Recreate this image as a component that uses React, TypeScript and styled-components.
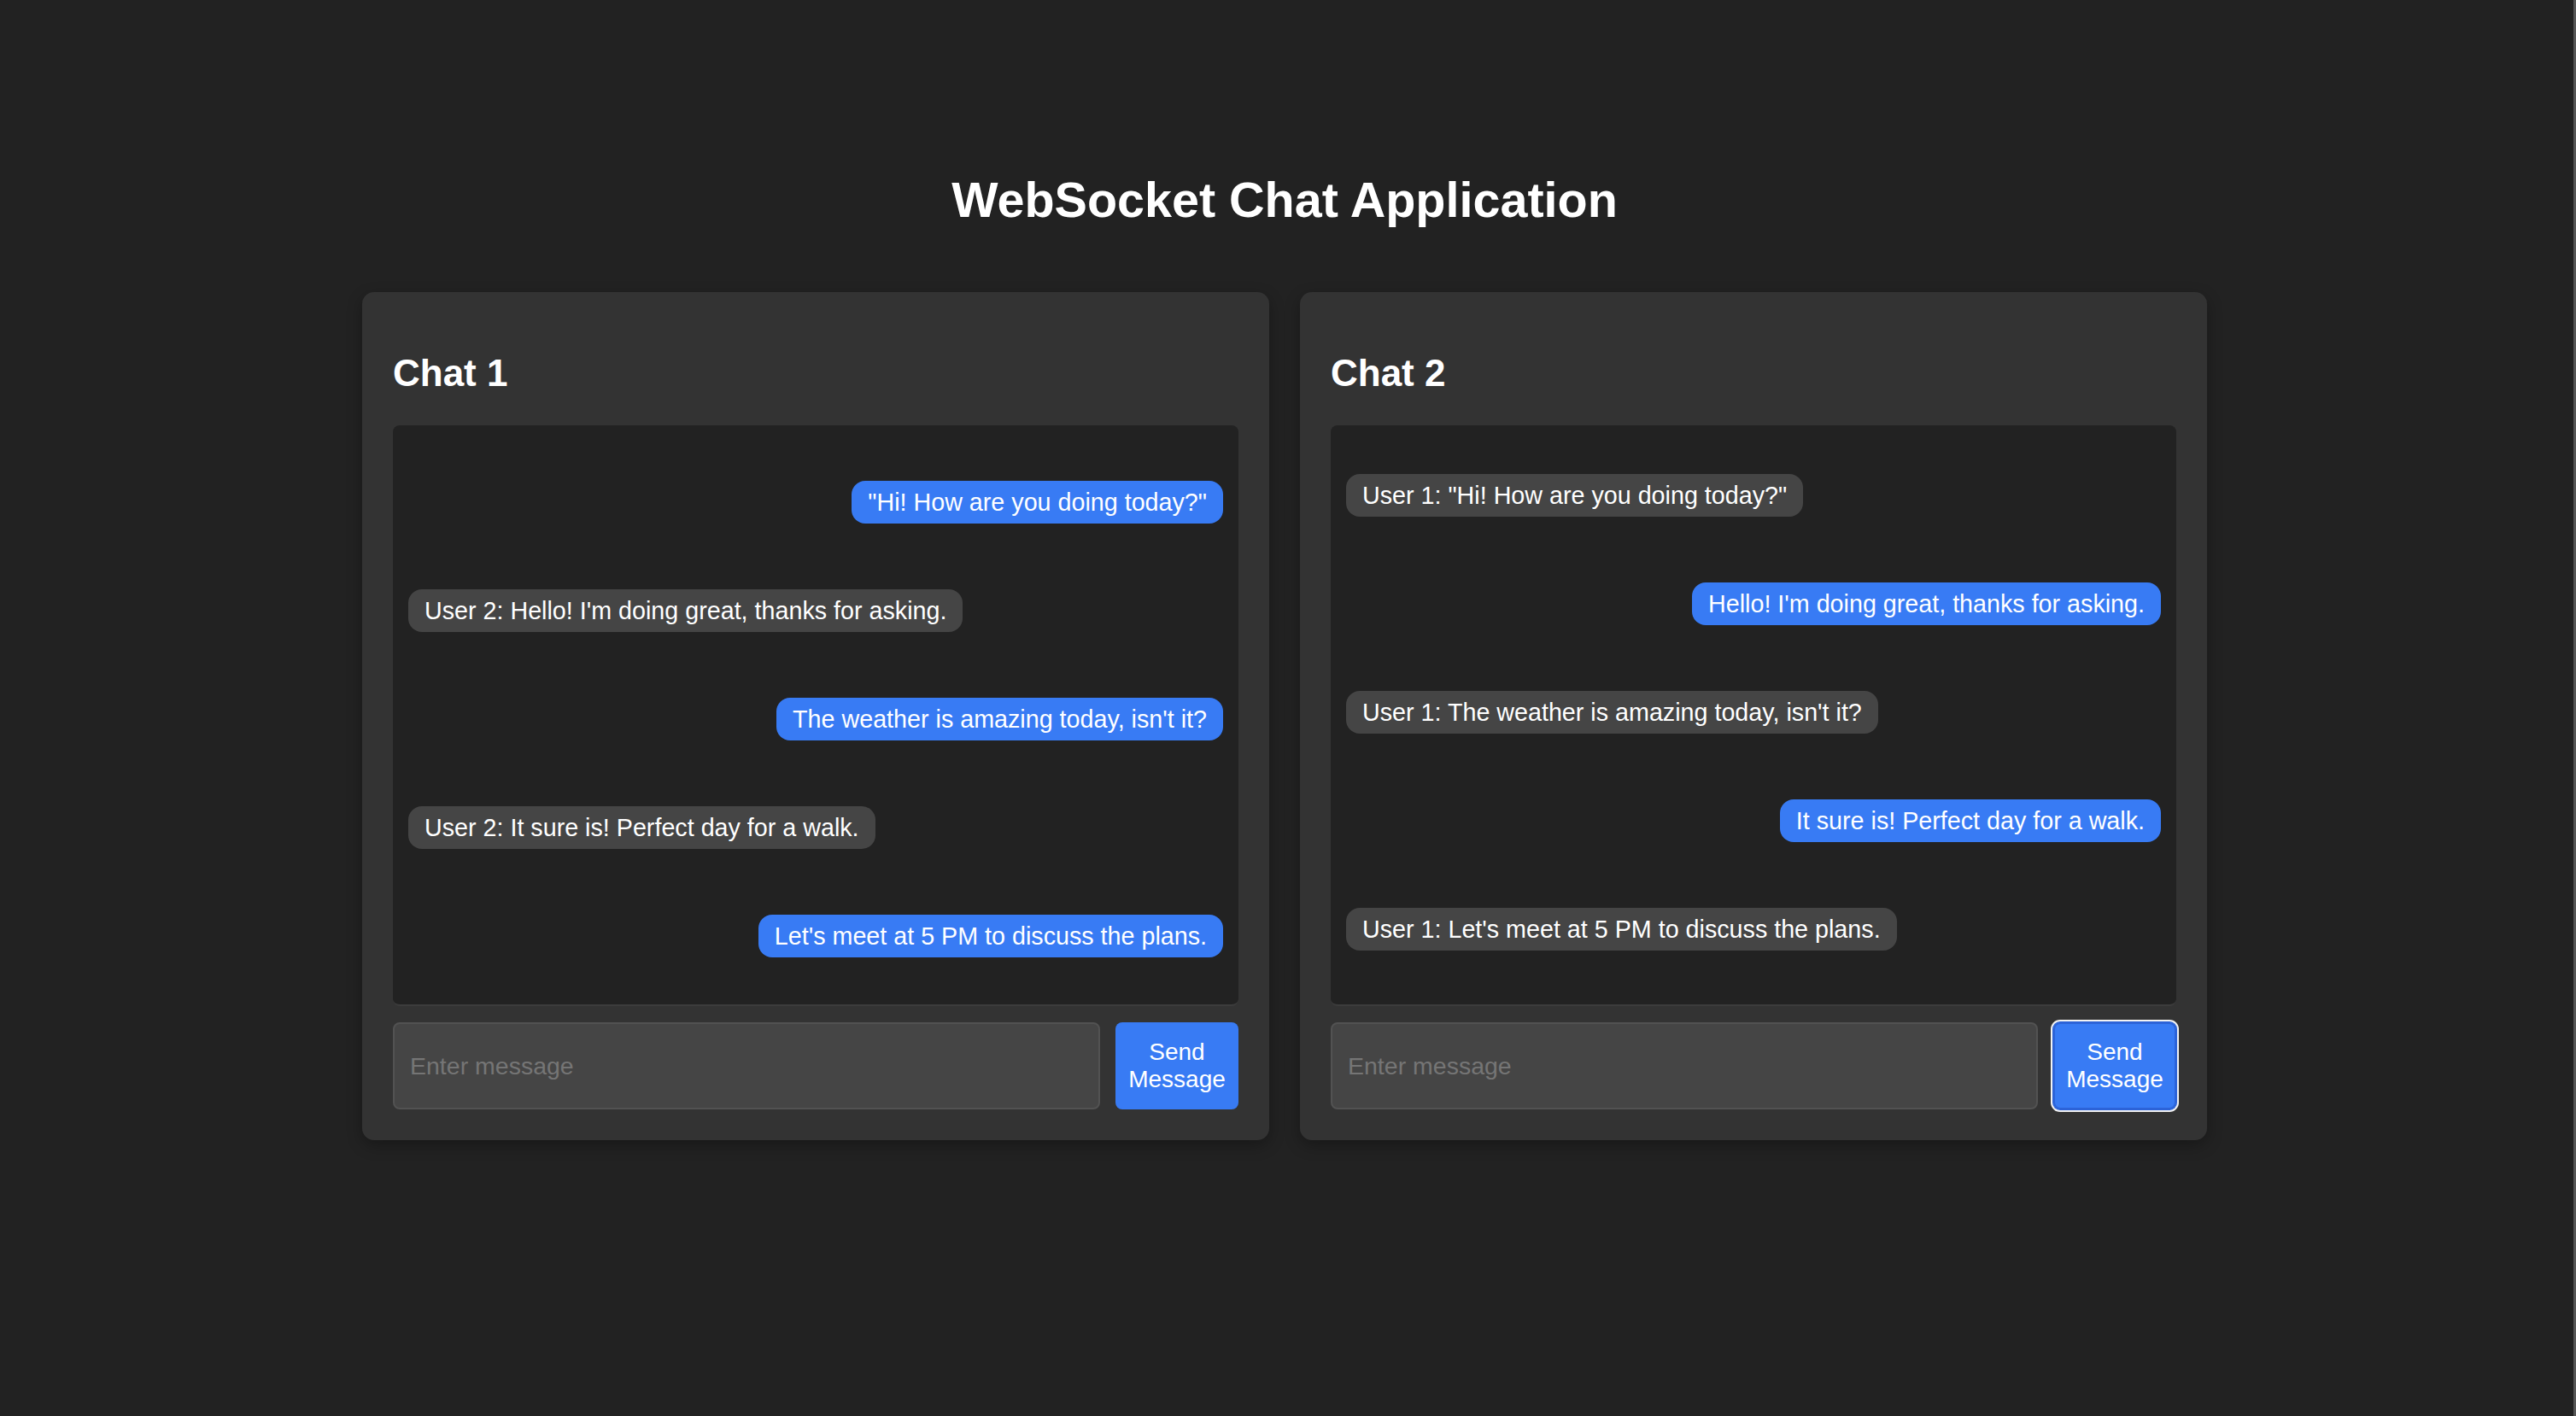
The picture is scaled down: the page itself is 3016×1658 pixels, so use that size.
import * as React from 'react';
import styled, { createGlobalStyle, css } from 'styled-components';

const GlobalStyle = createGlobalStyle`
  html, body {
    margin: 0;
    padding: 0;
    background: #222222;
  }
  body {
    font-family: 'Liberation Sans', Arial, Helvetica, sans-serif;
    color: #ffffff;
  }
  * {
    box-sizing: border-box;
  }
`;

type Message = { text: string; sent: boolean };

const chats: { title: string; messages: Message[]; focused?: boolean; startsSent: boolean }[] = [
  {
    title: 'Chat 1',
    startsSent: true,
    messages: [
      { text: '"Hi! How are you doing today?"', sent: true },
      { text: "User 2: Hello! I'm doing great, thanks for asking.", sent: false },
      { text: "The weather is amazing today, isn't it?", sent: true },
      { text: 'User 2: It sure is! Perfect day for a walk.', sent: false },
      { text: "Let's meet at 5 PM to discuss the plans.", sent: true },
    ],
  },
  {
    title: 'Chat 2',
    startsSent: false,
    focused: true,
    messages: [
      { text: 'User 1: "Hi! How are you doing today?"', sent: false },
      { text: "Hello! I'm doing great, thanks for asking.", sent: true },
      { text: "User 1: The weather is amazing today, isn't it?", sent: false },
      { text: 'It sure is! Perfect day for a walk.', sent: true },
      { text: "User 1: Let's meet at 5 PM to discuss the plans.", sent: false },
    ],
  },
];

export default function App() {
  return (
    <>
      <GlobalStyle />
      <Page>
        <Title>WebSocket Chat Application</Title>
        <Panels>
          {chats.map(chat => (
            <Panel key={chat.title}>
              <ChatTitle>{chat.title}</ChatTitle>
              <Messages startsSent={chat.startsSent}>
                {chat.messages.map((m, i) => (
                  <Row key={i} sent={m.sent}>
                    <Bubble sent={m.sent}>{m.text}</Bubble>
                  </Row>
                ))}
              </Messages>
              <Composer>
                <Input placeholder="Enter message" />
                <SendButton focused={chat.focused}>Send Message</SendButton>
              </Composer>
            </Panel>
          ))}
        </Panels>
      </Page>
    </>
  );
}

const Page = styled.div`
  min-height: 100vh;
  padding: 202px 5px 0 0;
  border-right: 3px solid #565656;
  display: flex;
  flex-direction: column;
  align-items: center;
`;

const Title = styled.h1`
  margin: 0 0 76px;
  font-size: 57.5px;
  font-weight: 700;
  line-height: 64px;
  color: #ffffff;
`;

const Panels = styled.div`
  display: grid;
  grid-template-columns: 1062px 1062px;
  gap: 36px;
  justify-content: center;
`;

const Panel = styled.section`
  background: #333333;
  border-radius: 14px;
  padding: 64px 36px 36px;
  box-shadow: 0 6px 18px rgba(0, 0, 0, 0.3);
  display: flex;
  flex-direction: column;
`;

const ChatTitle = styled.h2`
  margin: 5px 0 35px;
  font-size: 44px;
  line-height: 52px;
  font-weight: 700;
  color: #ffffff;
`;

const Messages = styled.div<{ startsSent: boolean }>`
  height: 680px;
  background: #222222;
  border-radius: 8px;
  border-bottom: 2px solid #3c3c3c;
  padding: ${p => (p.startsSent ? '65px 18px 0' : '57px 18px 0')};
  overflow: hidden;
  display: flex;
  flex-direction: column;
  gap: 77px;
`;

const Row = styled.div<{ sent: boolean }>`
  display: flex;
  justify-content: ${p => (p.sent ? 'flex-end' : 'flex-start')};
`;

const Bubble = styled.div<{ sent: boolean }>`
  background: ${p => (p.sent ? '#387bf4' : '#454545')};
  color: #ffffff;
  font-size: 28.7px;
  line-height: 32px;
  padding: 9px 19px;
  border-radius: 16px;
  white-space: nowrap;
`;

const Composer = styled.div`
  display: flex;
  gap: 18px;
  margin-top: 19px;
  height: 102px;
`;

const Input = styled.input`
  flex: 1;
  min-width: 0;
  height: 100%;
  background: #454545;
  border: 2px solid #525252;
  border-radius: 8px;
  padding: 0 18px;
  font-family: 'Liberation Sans', Arial, Helvetica, sans-serif;
  font-size: 28.5px;
  color: #ffffff;
  outline: none;

  ::placeholder {
    color: #7d7d7d;
  }
`;

const SendButton = styled.button<{ focused?: boolean }>`
  width: 144px;
  height: 100%;
  padding: 0 12px;
  background: #387bf4;
  border: none;
  border-radius: 8px;
  color: #ffffff;
  font-family: 'Liberation Sans', Arial, Helvetica, sans-serif;
  font-size: 28px;
  line-height: 32px;
  cursor: pointer;
  ${p =>
    p.focused &&
    css`
      box-shadow: inset 0 0 0 2px #2c63d8, 0 0 0 1px #2c63d8, 0 0 0 3px #f2f2f2;
    `}
`;
